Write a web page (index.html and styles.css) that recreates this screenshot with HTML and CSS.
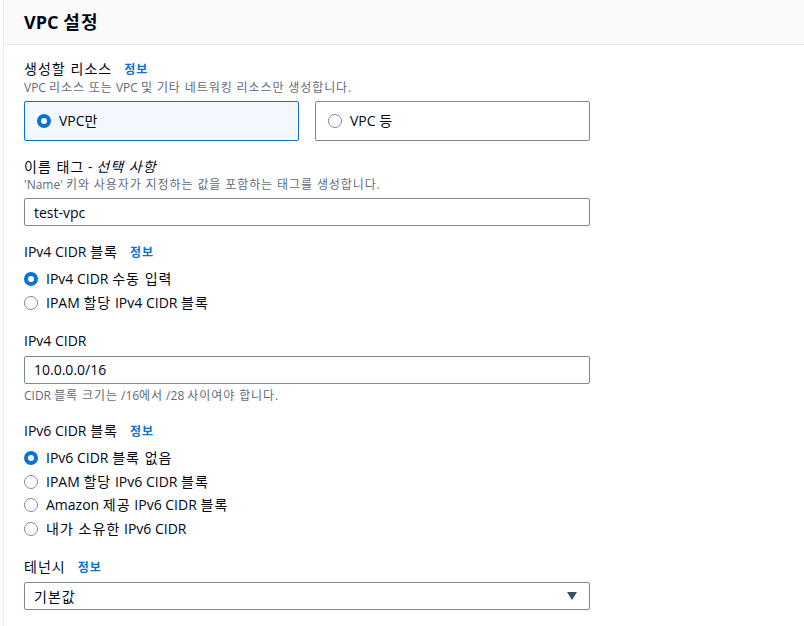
FILE: index.html
```html
<!DOCTYPE html>
<html lang="ko">
<head>
<meta charset="utf-8">
<title>VPC 설정</title>
<link rel="stylesheet" href="styles.css">
</head>
<body>
<div class="panel">
  <div class="panel-header"><h2 class="title">VPC <span class="ko">설정</span></h2></div>
  <div class="panel-body">
    <div class="field">
      <div class="label"><span class="ko">생성할 리소스</span><a class="info ko">정보</a></div>
      <div class="desc">VPC <span class="ko">리소스 또는</span> VPC <span class="ko">및 기타 네트워킹 리소스만 생성합니다</span>.</div>
      <div class="tiles">
        <div class="tile selected"><span class="radio checked"></span><span class="tile-text">VPC<span class="ko">만</span></span></div>
        <div class="tile"><span class="radio"></span><span class="tile-text">VPC <span class="ko">등</span></span></div>
      </div>
    </div>
    <div class="field">
      <div class="label"><span class="ko">이름 태그</span> - <i class="opt ko">선택 사항</i></div>
      <div class="desc">'Name' <span class="ko">키와 사용자가 지정하는 값을 포함하는 태그를 생성합니다</span>.</div>
      <div class="input">test-vpc</div>
    </div>
    <div class="field">
      <div class="label">IPv4 CIDR <span class="ko">블록</span><a class="info ko">정보</a></div>
      <div class="radios">
        <div class="opt-row"><span class="radio checked"></span><span>IPv4 CIDR <span class="ko">수동 입력</span></span></div>
        <div class="opt-row"><span class="radio"></span><span>IPAM <span class="ko">할당</span> IPv4 CIDR <span class="ko">블록</span></span></div>
      </div>
    </div>
    <div class="field">
      <div class="label">IPv4 CIDR</div>
      <div class="input">10.0.0.0/16</div>
      <div class="hint">CIDR <span class="ko">블록 크기는</span> /16<span class="ko">에서</span> /28 <span class="ko">사이여야 합니다</span>.</div>
    </div>
    <div class="field">
      <div class="label">IPv6 CIDR <span class="ko">블록</span><a class="info ko">정보</a></div>
      <div class="radios">
        <div class="opt-row"><span class="radio checked"></span><span>IPv6 CIDR <span class="ko">블록 없음</span></span></div>
        <div class="opt-row"><span class="radio"></span><span>IPAM <span class="ko">할당</span> IPv6 CIDR <span class="ko">블록</span></span></div>
        <div class="opt-row"><span class="radio"></span><span>Amazon <span class="ko">제공</span> IPv6 CIDR <span class="ko">블록</span></span></div>
        <div class="opt-row"><span class="radio"></span><span><span class="ko">내가 소유한</span> IPv6 CIDR</span></div>
      </div>
    </div>
    <div class="field">
      <div class="label"><span class="ko">테넌시</span><a class="info ko">정보</a></div>
      <div class="input select"><span class="ko">기본값</span><span class="caret"></span></div>
    </div>
  </div>
</div>
</body>
</html>
```
FILE: styles.css
```css
html, body {
  margin: 0;
  padding: 0;
  background: #ffffff;
}
body {
  font-family: "Open Sans", "Noto Sans CJK KR", sans-serif;
  color: #000716;
  font-size: 14px;
}
.ko {
  letter-spacing: 0.075em;
}
.panel {
  margin-left: 3px;
  border-left: 1px solid #e9ebed;
  min-height: 626px;
}
.panel-header {
  background: #fafafa;
  border-bottom: 1px solid #e9ebed;
  height: 44px;
  padding: 0 20px;
  display: flex;
  align-items: center;
}
.title {
  margin: 0;
  font-size: 18px;
  line-height: 22px;
  font-weight: 700;
  color: #000716;
}
.panel-body {
  padding: 14px 20px 0 20px;
  display: flex;
  flex-direction: column;
  gap: 16px;
}
.field {
  width: 566px;
  display: flex;
  flex-direction: column;
}
.label {
  font-size: 14px;
  line-height: 20px;
  color: #000716;
}
.opt {
  font-style: italic;
}
.info {
  color: #0972d3;
  font-weight: 700;
  font-size: 12px;
  margin-left: 12px;
}
.desc {
  font-size: 12px;
  line-height: 16px;
  color: #5f6b7a;
}
.tiles {
  margin-top: 5px;
  display: grid;
  grid-template-columns: 1fr 1fr;
  gap: 16px;
}
.tile {
  height: 40px;
  box-sizing: border-box;
  border: 1px solid #7d8998;
  border-radius: 2px;
  padding-left: 12px;
  display: flex;
  align-items: center;
  gap: 8px;
  background: #ffffff;
}
.tile.selected {
  border-color: #0972d3;
  background: #f2f8fd;
}
.tile-text {
  line-height: 20px;
}
.radio {
  width: 14px;
  height: 14px;
  box-sizing: border-box;
  border-radius: 50%;
  border: 1.5px solid #7d8998;
  background: #ffffff;
  flex: none;
}
.radio.checked {
  border: 4px solid #0972d3;
}
.input {
  margin-top: 5px;
  height: 28px;
  box-sizing: border-box;
  border: 1px solid #7d8998;
  border-radius: 2px;
  padding: 0 12px 0 9px;
  display: flex;
  align-items: center;
  font-size: 14px;
  color: #000716;
  background: #ffffff;
}
.hint {
  margin-top: 4px;
  padding-bottom: 1.5px;
  font-size: 12px;
  line-height: 16px;
  color: #5f6b7a;
}
.radios {
  margin-top: 4px;
  display: flex;
  flex-direction: column;
}
.opt-row {
  height: 23.75px;
  display: flex;
  align-items: center;
  gap: 8px;
  line-height: 20px;
}
.select {
  margin-top: 4px;
  justify-content: space-between;
}
.caret {
  width: 0;
  height: 0;
  border-left: 5px solid transparent;
  border-right: 5px solid transparent;
  border-top: 8px solid #414d5c;
}
```
